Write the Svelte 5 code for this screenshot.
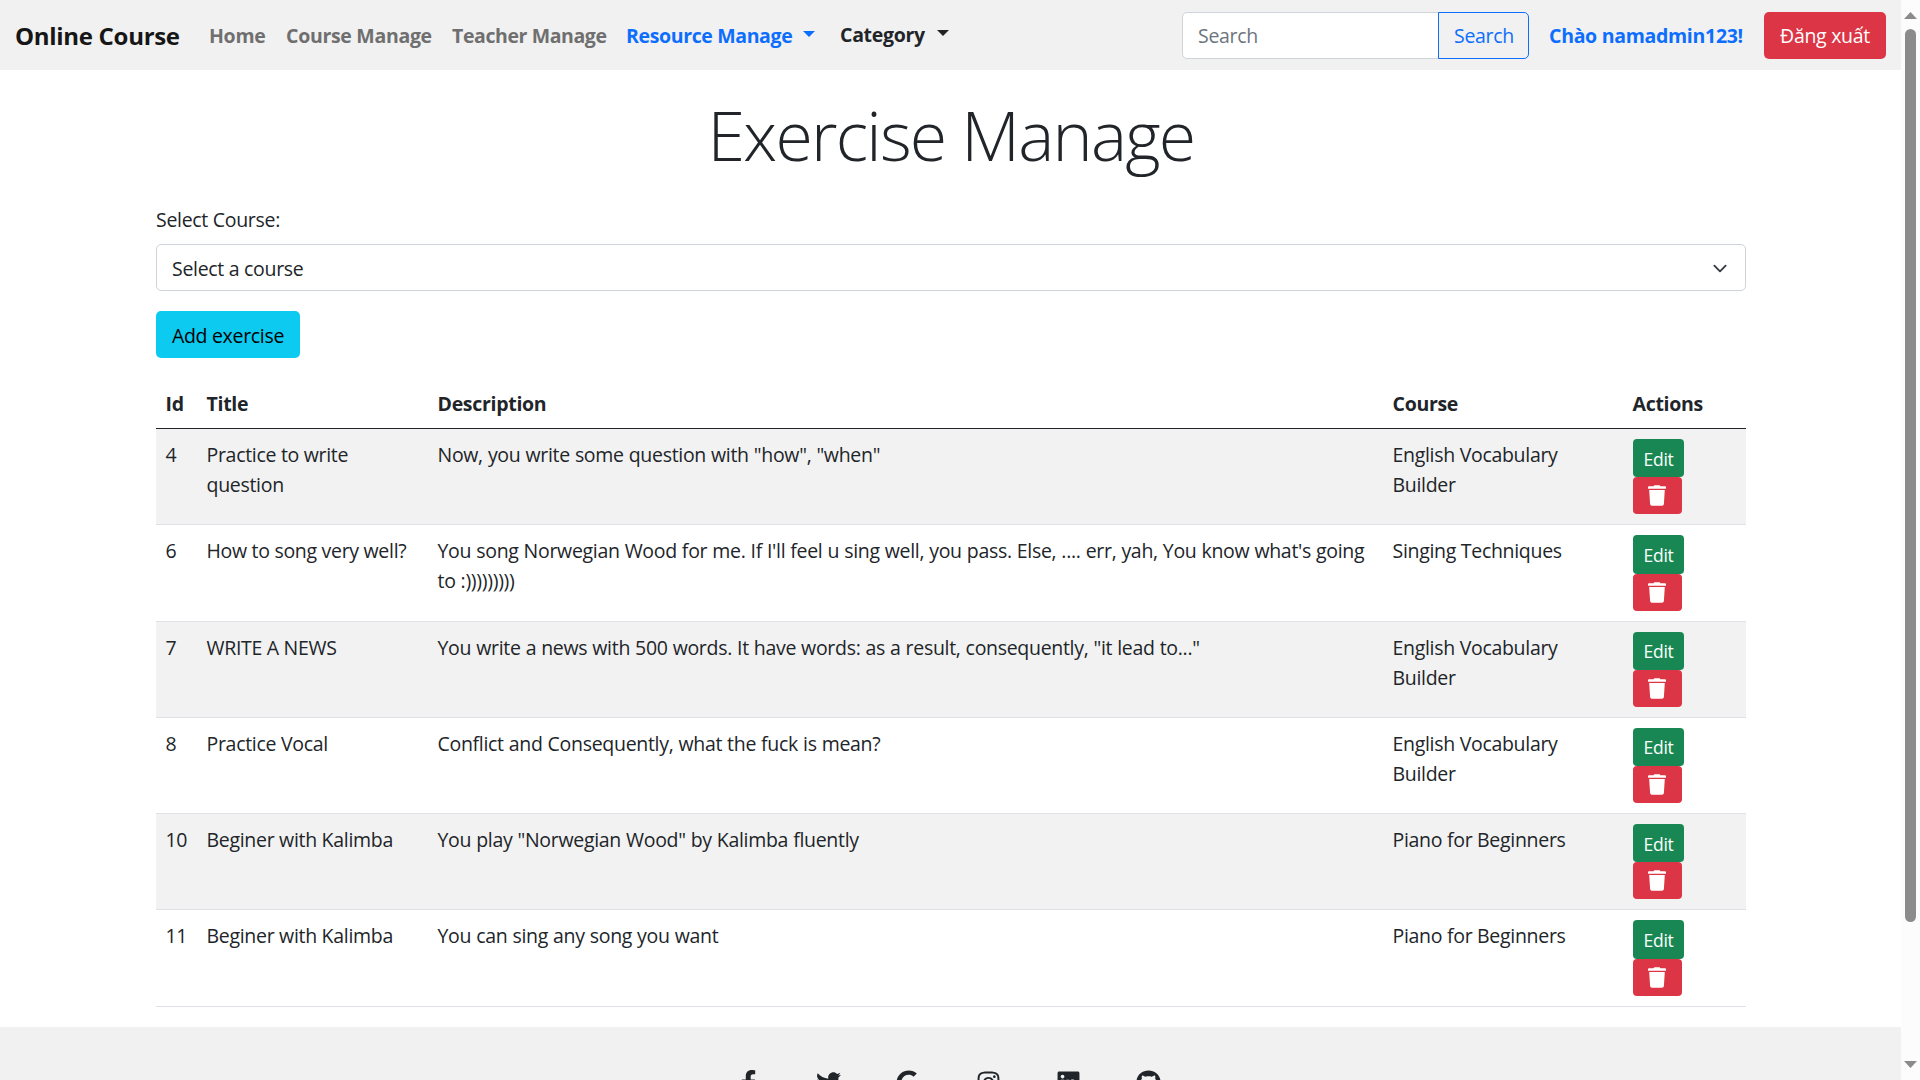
<script>
  const exercises = [
    { id: 4, title: 'Practice to write question', description: 'Now, you write some question with "how", "when"', course: 'English Vocabulary Builder' },
    { id: 6, title: 'How to song very well?', description: "You song Norwegian Wood for me. If I'll feel u sing well, you pass. Else, .... err, yah, You know what's going to :)))))))))", course: 'Singing Techniques' },
    { id: 7, title: 'WRITE A NEWS', description: 'You write a news with 500 words. It have words: as a result, consequently, "it lead to..."', course: 'English Vocabulary Builder' },
    { id: 8, title: 'Practice Vocal', description: 'Conflict and Consequently, what the fuck is mean?', course: 'English Vocabulary Builder' },
    { id: 10, title: 'Beginer with Kalimba', description: 'You play "Norwegian Wood" by Kalimba fluently', course: 'Piano for Beginners' },
    { id: 11, title: 'Beginer with Kalimba', description: 'You can sing any song you want', course: 'Piano for Beginners' }
  ];

  const socials = [
    { name: 'Facebook', box: '-96 0 512 512', d: 'M279.14 288l14.22-92.66h-88.91v-60.13c0-25.35 12.42-50.06 52.24-50.06h40.42V6.26S260.43 0 225.36 0c-73.22 0-121.08 44.38-121.08 124.72v70.62H22.89V288h81.39v224h100.17V288z' },
    { name: 'Twitter', box: '0 0 512 512', d: 'M459.37 151.716c.325 4.548.325 9.097.325 13.645 0 138.72-105.583 298.558-298.558 298.558-59.452 0-114.68-17.219-161.137-47.106 8.447.974 16.568 1.299 25.34 1.299 49.055 0 94.213-16.568 130.274-44.832-46.132-.975-84.792-31.188-98.112-72.772 6.498.974 12.995 1.624 19.818 1.624 9.421 0 18.843-1.3 27.614-3.573-48.081-9.747-84.143-51.98-84.143-102.985v-1.299c13.969 7.797 30.214 12.67 47.431 13.319-28.264-18.843-46.781-51.005-46.781-87.391 0-19.492 5.197-37.36 14.294-52.954 51.655 63.675 129.3 105.258 216.365 109.807-1.624-7.797-2.599-15.918-2.599-24.04 0-57.828 46.782-104.934 104.934-104.934 30.213 0 57.502 12.67 76.67 33.137 23.715-4.548 46.456-13.32 66.599-25.34-7.798 24.366-24.366 44.833-46.132 57.827 21.117-2.273 41.584-8.122 60.426-16.243-14.292 20.791-32.161 39.308-52.628 54.253z' },
    { name: 'Google', box: '-12 0 512 512', d: 'M488 261.8C488 403.3 391.1 504 248 504 110.8 504 0 393.2 0 256S110.8 8 248 8c66.8 0 123 24.5 166.3 64.9l-67.5 64.9C258.5 52.6 94.3 116.6 94.3 256c0 86.5 69.1 156.6 153.7 156.6 98.2 0 135-70.4 140.8-106.9H248v-85.3h236.1c2.3 12.7 3.9 24.9 3.9 41.4z' },
    { name: 'Instagram', box: '-32 0 512 512', d: 'M224.1 141c-63.6 0-114.9 51.3-114.9 114.9s51.3 114.9 114.9 114.9S339 319.500 339 255.900 287.700 141 224.100 141zm0 189.600c-41.100 0-74.700-33.500-74.700-74.700s33.500-74.700 74.700-74.700 74.700 33.500 74.700 74.700-33.600 74.700-74.700 74.700zm146.400-194.300c0 14.900-12 26.800-26.800 26.800-14.900 0-26.800-12-26.800-26.800s12-26.800 26.800-26.800 26.800 12 26.800 26.800zm76.100 27.200c-1.700-35.900-9.900-67.700-36.200-93.900-26.200-26.200-58-34.400-93.900-36.200-37-2.100-147.900-2.100-184.900 0-35.800 1.700-67.600 9.900-93.900 36.100s-34.400 58-36.200 93.900c-2.100 37-2.100 147.900 0 184.900 1.700 35.900 9.900 67.700 36.200 93.900s58 34.400 93.900 36.200c37 2.100 147.900 2.100 184.900 0 35.900-1.700 67.700-9.900 93.900-36.200 26.200-26.200 34.400-58 36.200-93.900 2.100-37 2.100-147.800 0-184.800zM398.800 388c-7.800 19.600-22.900 34.700-42.600 42.600-29.500 11.700-99.500 9-132.100 9s-102.700 2.600-132.100-9c-19.600-7.800-34.700-22.900-42.600-42.600-11.700-29.500-9-99.500-9-132.100s-2.600-102.700 9-132.100c7.800-19.600 22.900-34.700 42.600-42.600 29.500-11.700 99.500-9 132.100-9s102.700-2.600 132.100 9c19.600 7.800 34.700 22.900 42.600 42.600 11.700 29.500 9 99.500 9 132.100s2.700 102.700-9 132.100z' },
    { name: 'LinkedIn', box: '-32 0 512 512', d: 'M416 32H31.900C14.300 32 0 46.500 0 64.300v383.400C0 465.500 14.300 480 31.900 480H416c17.600 0 32-14.500 32-32.300V64.300c0-17.800-14.400-32.300-32-32.300zM135.400 416H69V202.200h66.500V416zm-33.200-243c-21.300 0-38.500-17.300-38.500-38.500S80.900 96 102.200 96c21.200 0 38.500 17.300 38.500 38.500 0 21.300-17.200 38.500-38.500 38.500zm282.100 243h-66.400V312c0-24.800-.5-56.700-34.500-56.700-34.600 0-39.900 27-39.900 54.900V416h-66.400V202.200h63.700v29.200h.9c8.900-16.800 30.600-34.500 62.900-34.500 67.200 0 79.700 44.300 79.700 101.900V416z' },
    { name: 'GitHub', box: '-8 0 512 512', d: 'M248 8C106.100 8 0 113.300 0 252c0 110.900 69.800 205.800 169.500 239.200 12.800 2.300 17.300-5.600 17.300-12.100 0-6.200-.3-40.400-.3-61.400 0 0-70 15-84.700-29.800 0 0-11.400-29.100-27.800-36.600 0 0-22.900-15.700 1.600-15.400 0 0 24.900 2 38.600 25.800 21.900 38.600 58.600 27.500 72.900 20.900 2.300-16 8.800-27.100 16-33.700-55.900-6.200-112.300-14.300-112.300-110.500 0-27.500 7.600-41.300 23.600-58.900-2.600-6.500-11.100-33.300 2.600-67.900 20.900-6.500 69 27 69 27 20-5.600 41.500-8.500 62.800-8.500s42.800 2.900 62.800 8.500c0 0 48.100-33.600 69-27 13.700 34.700 5.200 61.400 2.600 67.900 16 17.700 25.800 31.500 25.800 58.900 0 96.500-58.900 104.200-114.800 110.500 9.200 7.900 17 22.900 17 46.400 0 33.700-.3 75.400-.3 83.600 0 6.500 4.600 14.400 17.300 12.100C428.200 457.800 496 362.900 496 252 496 113.300 389.800 8 248 8z' }
  ];
</script>

<div class="window">
  <div class="page">
    <nav class="navbar">
      <a class="brand" href="#top">Online Course</a>
      <a class="link home" href="#home">Home</a>
      <a class="link course-link" href="#courses">Course Manage</a>
      <a class="link teacher" href="#teachers">Teacher Manage</a>
      <a class="link resource" href="#resources">Resource Manage<i class="caret"></i></a>
      <a class="link category" href="#category">Category<i class="caret"></i></a>
      <form class="search">
        <input type="search" placeholder="Search" aria-label="Search" />
        <button type="button">Search</button>
      </form>
      <span class="greeting">Chào namadmin123!</span>
      <button class="logout" type="button">Đăng xuất</button>
    </nav>

    <main>
      <h1>Exercise Manage</h1>
      <div class="label">Select Course:</div>
      <div class="select">
        <span>Select a course</span>
        <svg viewBox="0 0 16 16" width="20" height="15" preserveAspectRatio="xMidYMid meet"><path d="m2 5 6 6 6-6" /></svg>
      </div>
      <button class="add" type="button">Add exercise</button>

      <div class="table">
        <div class="row head">
          <div>Id</div><div>Title</div><div>Description</div><div>Course</div><div>Actions</div>
        </div>
        {#each exercises as item (item.id)}
          <div class="row body">
            <div>{item.id}</div>
            <div class="title">{item.title}</div>
            <div class="description">{item.description}</div>
            <div>{item.course}</div>
            <div class="actions">
              <button class="edit" type="button">Edit</button>
              <button class="delete" type="button" aria-label="Delete">
                <svg viewBox="0 0 18 21" width="18" height="21">
                  <path d="M0 2.200q0-.9.900-.9h4.600L6.400.3h5.200l.9 1h4.600q.9 0 .9.900v1.600H0z" />
                  <path d="M1.200 5.100h15.600l-.9 13.900q-.1 1.700-1.900 1.700H4q-1.800 0-1.900-1.700z" />
                </svg>
              </button>
            </div>
          </div>
        {/each}
      </div>
    </main>

    <footer>
      {#each socials as s (s.name)}
        <svg viewBox={s.box} width="25" height="25" aria-label={s.name}><path d={s.d} /></svg>
      {/each}
    </footer>
  </div>

  <div class="scrollbar">
    <svg width="13" height="7" viewBox="0 0 13 7"><path d="M6.500 0 13 7H0z" /></svg>
    <div class="thumb"></div>
    <svg class="down" width="13" height="7" viewBox="0 0 13 7"><path d="M0 0h13L6.500 7z" /></svg>
  </div>
</div>

<style>
  :global(body) { overflow: hidden; }
  .window {
    display: flex;
    width: 1920px;
    height: 1080px;
    overflow: hidden;
    background: #fff;
    color: #212529;
    font: 400 19.5px/30px "Open Sans", "Noto Sans", sans-serif;
    letter-spacing: -0.3px;
  }
  .window * { box-sizing: border-box; }
  .page { width: 1901px; height: 1080px; overflow: hidden; display: flex; flex-direction: column; }
  button { font: inherit; letter-spacing: inherit; padding: 0; }
  a { color: inherit; text-decoration: none; }

  .navbar {
    display: flex;
    flex: none;
    align-items: center;
    height: 70px;
    padding: 0 15px 0 15px;
    background: #f1f1f1;
    font-weight: 700;
    white-space: nowrap;
  }
  .brand { width: 194px; padding-top: 2px; font-size: 24px; color: #161616; }
  .link { padding-top: 2px; color: #6f6f6f; }
  .home { width: 77px; }
  .course-link { width: 166px; }
  .teacher { width: 174px; letter-spacing: -0.4px; }
  .resource { width: 214px; color: #0d6efd; letter-spacing: -0.36px; }
  .category { width: 120px; color: #212529; padding-top: 0; }
  .resource, .category { display: flex; align-items: center; }
  .caret {
    margin: -3px 0 0 11px;
    border: 6px solid transparent;
    border-top-color: currentColor;
    border-bottom: 0;
  }
  .category .caret { margin: -4px 0 0 12px; }
  .resource .caret { margin-top: -5px; }
  .search { display: flex; margin: 0 0 0 auto; height: 47px; font-weight: 400; }
  .search input {
    width: 257px;
    padding: 2px 15px 0;
    border: 1px solid #ced4da;
    border-radius: 5px 0 0 5px;
    font: inherit;
    letter-spacing: inherit;
    background: #fff;
  }
  .search input::placeholder { color: #6c757d; opacity: 1; }
  .search button {
    width: 91px;
    margin-left: -1px;
    padding: 2px 0 0 1px;
    border: 1px solid #0d6efd;
    border-radius: 0 5px 5px 0;
    background: transparent;
    color: #0d6efd;
  }
  .greeting { width: 195px; margin: 0 20px; padding-top: 2px; color: #0d6efd; }
  .logout { width: 122px; height: 47px; padding-top: 2px; border: 0; border-radius: 5px; background: #dc3545; color: #fff; font-weight: 400; }

  main { width: 1590px; flex: none; height: 957px; margin: 0 155px 0 156px; }
  h1 { margin: 23px 0 0; text-align: center; font-size: 68px; line-height: 84px; font-weight: 300; letter-spacing: -1.75px; }
  .label { margin-top: 28px; }
  .select {
    display: flex;
    align-items: center;
    justify-content: space-between;
    height: 47px;
    margin-top: 9px;
    padding: 2px 15px 0;
    border: 1px solid #ced4da;
    border-radius: 5px;
  }
  .select svg { fill: none; stroke: #343a40; stroke-width: 2; stroke-linecap: round; stroke-linejoin: round; }
  .add { display: block; width: 144px; height: 47px; margin-top: 20px; padding-top: 2px; border: 0; border-radius: 5px; background: #0dcaf0; color: #000; }
  .table { margin-top: 20px; }
  .row { display: grid; grid-template-columns: 41px 231px 955px 240px 123px; }
  .row > div { padding: 11px 10px 0 9.5px; }
  .head { height: 51px; border-bottom: 1px solid #212529; font-weight: 700; }
  .body { height: 96.25px; border-bottom: 1px solid #dee2e6; }
  .body:nth-child(even) { background: #f2f2f2; }
  .description { word-spacing: 0.25px; }
  .row > .actions { display: flex; flex-direction: column; align-items: flex-start; padding: 10px 10px 0; }
  .edit { width: 51px; height: 38.4px; padding-top: 1px; border: 0; border-radius: 4px; background: #198754; color: #fff; font-size: 17.5px; }
  .delete { display: flex; align-items: center; justify-content: center; width: 49px; height: 37px; padding-right: 1px; border: 0; border-radius: 4px; background: #dc3545; }
  .delete svg { fill: #fff; }

  footer { flex: none; display: flex; justify-content: center; gap: 55px; height: 100px; padding: 43px 5px 0 0; background: #f1f1f1; }
  footer svg { flex: none; fill: #212529; }

  .scrollbar { display: flex; flex-direction: column; align-items: center; width: 19px; height: 1080px; padding: 12px 0; background: #fcfcfc; }
  .scrollbar svg { flex: none; fill: #8b8b8b; }
  .thumb { width: 11px; height: 893px; margin-top: 10px; border-radius: 6px; background: #8b8b8b; }
  .down { margin-top: auto; }
</style>
